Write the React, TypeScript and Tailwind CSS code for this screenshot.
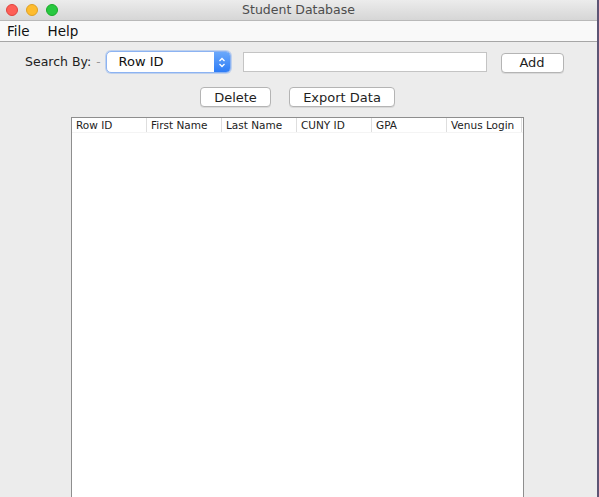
import React from "react";

const columns = ["Row ID", "First Name", "Last Name", "CUNY ID", "GPA", "Venus Login"];

function MacButton({ label, width }: { label: string; width: string }) {
  return (
    <button
      className={`${width} h-[20px] rounded-[4px] border border-[#b4b4b4] bg-white text-[13px] leading-none text-[#1e1e1e] shadow-[0_1px_0_rgba(0,0,0,0.08)]`}
    >
      {label}
    </button>
  );
}

export default function App() {
  return (
    <div
      className="flex h-[497px] w-[599px] overflow-hidden"
      style={{ fontFamily: '"DejaVu Sans", "Liberation Sans", sans-serif' }}
    >
      <div className="flex w-[597px] flex-col bg-[#ececec]">
        {/* title bar */}
        <div className="relative flex h-[21px] items-center justify-center border-b border-[#b9b9b9] bg-gradient-to-b from-[#ececec] to-[#d6d6d6]">
          <div className="absolute left-[6px] top-[4px] flex gap-[8px]">
            <span className="h-[12px] w-[12px] rounded-full border border-[#e0443e] bg-[#fe5f57]" />
            <span className="h-[12px] w-[12px] rounded-full border border-[#dea123] bg-[#febc2e]" />
            <span className="h-[12px] w-[12px] rounded-full border border-[#1aab29] bg-[#28c840]" />
          </div>
          <span className="text-[12.5px] text-[#4d4d4d]">Student Database</span>
        </div>

        {/* menu bar */}
        <div className="flex h-[21px] items-center gap-[18px] border-b border-[#a6a6a6] bg-[#f9f9f9] pl-[7px] text-[13.5px] text-[#111]">
          <span>File</span>
          <span>Help</span>
        </div>

        {/* search row */}
        <div className="mt-[9px] flex h-[22px] items-center">
          <span className="ml-[25px] text-[12.5px] text-[#222]">Search By:</span>
          <span className="ml-[5px] text-[12px] text-[#999]">-</span>
          <div className="ml-[5px] flex h-[22px] w-[125px] overflow-hidden rounded-[5px] border border-[#8cb3f2] bg-white shadow-[0_0_0_1px_rgba(110,160,240,0.35)]">
            <span className="flex-1 pl-[12px] text-[13px] leading-[20px] text-[#111]">Row ID</span>
            <div className="flex w-[16px] items-center justify-center bg-gradient-to-b from-[#6aa8fb] to-[#2d7cf6]">
              <svg width="8" height="13" viewBox="0 0 8 13" fill="none" stroke="white" strokeWidth="1.3">
                <path d="M1.5 5 L4 2.5 L6.5 5" />
                <path d="M1.5 8 L4 10.5 L6.5 8" />
              </svg>
            </div>
          </div>
          <input
            className="ml-[12px] h-[20px] w-[244px] border border-[#c4c4c4] bg-white outline-none"
            type="text"
          />
          <div className="ml-[14px]">
            <MacButton label="Add" width="w-[63px]" />
          </div>
        </div>

        {/* action row */}
        <div className="mt-[13px] flex h-[21px] items-center">
          <div className="ml-[200px]">
            <MacButton label="Delete" width="w-[71px]" />
          </div>
          <div className="ml-[18px]">
            <MacButton label="Export Data" width="w-[106px]" />
          </div>
        </div>

        {/* table */}
        <div className="ml-[71px] mt-[10px] flex w-[453px] flex-1 flex-col border-x border-t border-[#8e8e8e] bg-white">
          <div className="flex h-[15px] border-b border-[#f4f4f4] bg-white">
            {columns.map((c) => (
              <div
                key={c}
                className="w-[75px] truncate border-r border-[#dedede] pl-[4px] text-[10.5px] leading-[15px] text-[#222]"
              >
                {c}
              </div>
            ))}
          </div>
          <div className="flex-1" />
        </div>
      </div>
      <div className="w-[2px] bg-[#5d5575]" />
    </div>
  );
}
